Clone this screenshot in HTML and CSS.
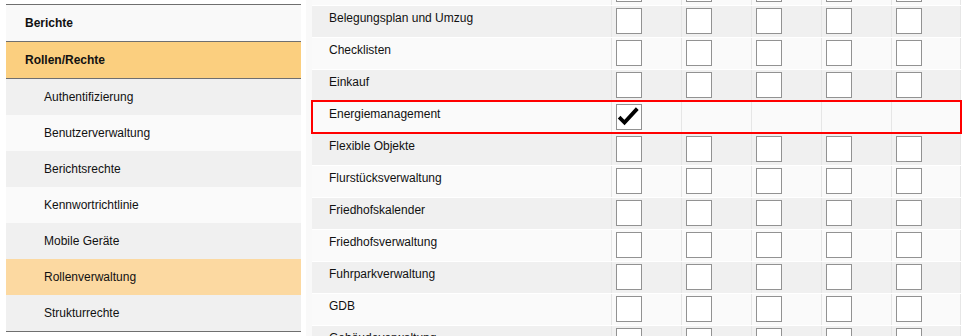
FILE: index.html
```html
<!DOCTYPE html>
<html lang="de">
<head>
    <meta charset="UTF-8">
    <title>Rollenverwaltung</title>
    <link rel="stylesheet" href="styles.css">
</head>
<body>
    <div class="page">
        <nav class="menu">
            <div class="menu-group">Berichte</div>
            <div class="menu-group active">Rollen/Rechte</div>
            <ul class="submenu">
                <li>Authentifizierung</li>
                <li>Benutzerverwaltung</li>
                <li>Berichtsrechte</li>
                <li>Kennwortrichtlinie</li>
                <li>Mobile Geräte</li>
                <li class="current">Rollenverwaltung</li>
                <li>Strukturrechte</li>
            </ul>
        </nav>

        <div class="rights">
            <div class="rights-table">
                <!-- row scrolled out above the view -->
                <div class="row">
                    <div class="label"></div>
                    <div class="cell"><span class="box"></span></div>
                    <div class="cell"><span class="box"></span></div>
                    <div class="cell"><span class="box"></span></div>
                    <div class="cell"><span class="box"></span></div>
                    <div class="cell"><span class="box"></span></div>
                </div>
                <div class="row">
                    <div class="label">Belegungsplan und Umzug</div>
                    <div class="cell"><span class="box"></span></div>
                    <div class="cell"><span class="box"></span></div>
                    <div class="cell"><span class="box"></span></div>
                    <div class="cell"><span class="box"></span></div>
                    <div class="cell"><span class="box"></span></div>
                </div>
                <div class="row">
                    <div class="label">Checklisten</div>
                    <div class="cell"><span class="box"></span></div>
                    <div class="cell"><span class="box"></span></div>
                    <div class="cell"><span class="box"></span></div>
                    <div class="cell"><span class="box"></span></div>
                    <div class="cell"><span class="box"></span></div>
                </div>
                <div class="row">
                    <div class="label">Einkauf</div>
                    <div class="cell"><span class="box"></span></div>
                    <div class="cell"><span class="box"></span></div>
                    <div class="cell"><span class="box"></span></div>
                    <div class="cell"><span class="box"></span></div>
                    <div class="cell"><span class="box"></span></div>
                </div>
                <div class="row marked">
                    <div class="label">Energiemanagement</div>
                    <div class="cell">
                        <span class="box">
                            <svg width="24" height="24" viewBox="0 0 24 24">
                                <path d="M3.5 13.5 L7.5 17.5 L19 5" fill="none" stroke="#000" stroke-width="3.8" stroke-linecap="square"/>
                            </svg>
                        </span>
                    </div>
                    <div class="cell"></div>
                    <div class="cell"></div>
                    <div class="cell"></div>
                    <div class="cell"></div>
                </div>
                <div class="row">
                    <div class="label">Flexible Objekte</div>
                    <div class="cell"><span class="box"></span></div>
                    <div class="cell"><span class="box"></span></div>
                    <div class="cell"><span class="box"></span></div>
                    <div class="cell"><span class="box"></span></div>
                    <div class="cell"><span class="box"></span></div>
                </div>
                <div class="row">
                    <div class="label">Flurstücksverwaltung</div>
                    <div class="cell"><span class="box"></span></div>
                    <div class="cell"><span class="box"></span></div>
                    <div class="cell"><span class="box"></span></div>
                    <div class="cell"><span class="box"></span></div>
                    <div class="cell"><span class="box"></span></div>
                </div>
                <div class="row">
                    <div class="label">Friedhofskalender</div>
                    <div class="cell"><span class="box"></span></div>
                    <div class="cell"><span class="box"></span></div>
                    <div class="cell"><span class="box"></span></div>
                    <div class="cell"><span class="box"></span></div>
                    <div class="cell"><span class="box"></span></div>
                </div>
                <div class="row">
                    <div class="label">Friedhofsverwaltung</div>
                    <div class="cell"><span class="box"></span></div>
                    <div class="cell"><span class="box"></span></div>
                    <div class="cell"><span class="box"></span></div>
                    <div class="cell"><span class="box"></span></div>
                    <div class="cell"><span class="box"></span></div>
                </div>
                <div class="row">
                    <div class="label">Fuhrparkverwaltung</div>
                    <div class="cell"><span class="box"></span></div>
                    <div class="cell"><span class="box"></span></div>
                    <div class="cell"><span class="box"></span></div>
                    <div class="cell"><span class="box"></span></div>
                    <div class="cell"><span class="box"></span></div>
                </div>
                <div class="row">
                    <div class="label">GDB</div>
                    <div class="cell"><span class="box"></span></div>
                    <div class="cell"><span class="box"></span></div>
                    <div class="cell"><span class="box"></span></div>
                    <div class="cell"><span class="box"></span></div>
                    <div class="cell"><span class="box"></span></div>
                </div>
                <div class="row">
                    <div class="label">Gebäudeverwaltung</div>
                    <div class="cell"><span class="box"></span></div>
                    <div class="cell"><span class="box"></span></div>
                    <div class="cell"><span class="box"></span></div>
                    <div class="cell"><span class="box"></span></div>
                    <div class="cell"><span class="box"></span></div>
                </div>
            </div>
        </div>
    </div>
</body>
</html>
```

FILE: styles.css
```css
html, body {
    margin: 0;
    padding: 0;
    height: 100%;
    overflow: hidden;
    background: #fff;
}

body {
    font-family: "Liberation Sans", Arial, sans-serif;
    font-size: 12px;
    color: #111;
}

.page {
    display: flex;
    align-items: flex-start;
}

/* left navigation */
.menu {
    width: 295px;
    margin: 4px 0 0 6px;
    border-bottom: 1px solid #6f6f6f;
}

.menu-group {
    height: 36px;
    line-height: 36px;
    padding-left: 19px;
    border-top: 1px solid #6f6f6f;
    background: #f9f9f9;
    font-weight: bold;
}

.menu-group.active {
    background: #fbcf7f;
}

.submenu {
    list-style: none;
    margin: 0;
    padding: 0;
    border-top: 1px solid #6f6f6f;
}

.submenu li {
    height: 36px;
    line-height: 36px;
    padding-left: 38px;
    background: #f0f0f0;
}

.submenu li:nth-child(even) {
    background: #fafafa;
}

.submenu li.current {
    background: #fcd9a1;
}

/* rights matrix */
.rights {
    margin-left: 5px;
    padding-left: 6px;
    background: #f9f9f9;
}

.rights-table {
    margin-top: -27px;
}

.row {
    display: grid;
    grid-template-columns: 299px repeat(5, 70px);
    height: 31px;
    border-top: 1px solid #fff;
    background: #fafafa;
}

.row:nth-child(even) {
    background: #f0f0f0;
}

.row.marked {
    position: relative;
    outline: 2px solid #f00;
    outline-offset: -1px;
}

.label {
    padding: 5px 0 0 17px;
    line-height: 14px;
}

.cell {
    border-left: 1px solid #e6e6e6;
    padding: 2px 0 0 4px;
}

.cell:last-child {
    border-right: 1px solid #e6e6e6;
}

.box {
    display: block;
    width: 24px;
    height: 24px;
    border: 1px solid #929292;
    background: #fff;
}

.box svg {
    display: block;
}
```
